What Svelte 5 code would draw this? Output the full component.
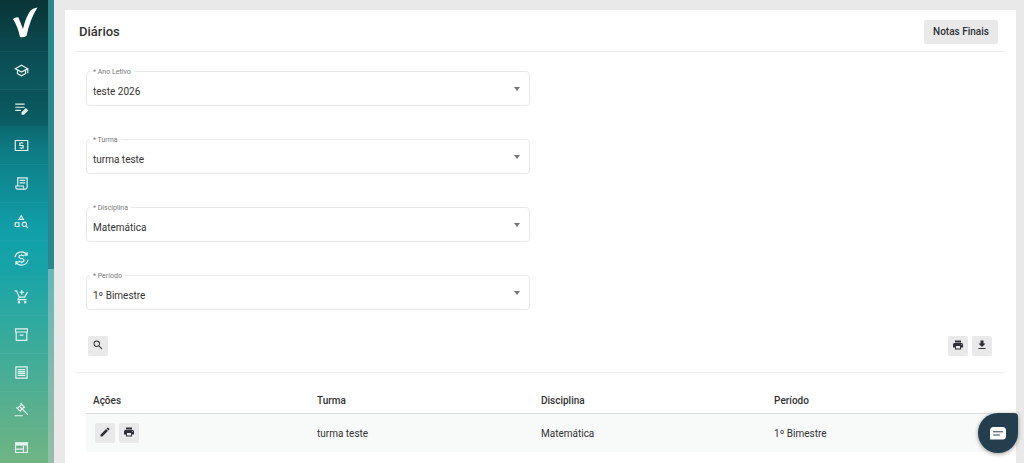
<script lang="ts">
  const menu = [
    { name: 'Acadêmico', icon: 'school' },
    { name: 'Diários', icon: 'edit-note', active: true },
    { name: 'Financeiro', icon: 'money' },
    { name: 'Notas fiscais', icon: 'receipt' },
    { name: 'Categorias', icon: 'category-search' },
    { name: 'Câmbio', icon: 'exchange' },
    { name: 'Compras', icon: 'cart' },
    { name: 'Arquivo', icon: 'archive' },
    { name: 'Relatórios', icon: 'list' },
    { name: 'Jurídico', icon: 'gavel' },
    { name: 'Portal', icon: 'web' },
  ];

  const fields = [
    { id: 'ano', label: 'Ano Letivo', value: 'teste 2026' },
    { id: 'turma', label: 'Turma', value: 'turma teste' },
    { id: 'disciplina', label: 'Disciplina', value: 'Matemática' },
    { id: 'periodo', label: 'Período', value: '1º Bimestre' },
  ];

  const rows = [
    { turma: 'turma teste', disciplina: 'Matemática', periodo: '1º Bimestre' },
  ];
</script>

{#snippet printIcon()}
  <svg viewBox="0 0 24 24"><path d="M19 8H5c-1.66 0-3 1.34-3 3v6h4v4h12v-4h4v-6c0-1.66-1.34-3-3-3zm-3 11H8v-5h8v5zm3-7c-.55 0-1-.45-1-1s.45-1 1-1 1 .45 1 1-.45 1-1 1zm-1-9H6v4h12V3z" /></svg>
{/snippet}

<div class="page">
  <aside class="sidebar">
    <div class="menu">
      <a class="logo" href="#inicio" aria-label="Início">
        <svg viewBox="0 0 26 32"><path d="M1 12 Q4 9.500 6.500 10.500 L11 22 Q14 9 19 3 Q21 1 25.500 0.500 Q18 12 14.500 29 Q11 31 8 30 Q6 20 1 12 Z" /></svg>
      </a>
      <nav>
        {#each menu as item}
          <a href="#{item.icon}" class="menu-item" class:active={item.active} aria-label={item.name}>
            <svg viewBox="0 0 24 24">
              {#if item.icon === 'school'}
                <path d="M12 3.500 22 9 12 14.500 2 9Z M5.500 11.500V17L12 20.500 18.500 17V11.500 M22 9V16.500" />
              {:else if item.icon === 'edit-note'}
                <path d="M2 5H17M2 10H17M2 15H11" />
                <path class="solid" d="M12 22V18L19 11 23 15 16 22Z" />
              {:else if item.icon === 'money'}
                <path d="M2 4H22V20H2Z M15 8H9.500V12H14.500V16H9 M12 6.500V8M12 16V17.500" />
              {:else if item.icon === 'receipt'}
                <path d="M6 16V3H21V18Q21 21 18 21H5Q3 21 3 18V16H15V18Q15 21 18 21 M9 7H18M9 11H18" />
              {:else if item.icon === 'category-search'}
                <path d="M11.500 2.500 15 8.500H8Z M2 14H8V20H2Z" />
                <circle cx="16.500" cy="16.500" r="3.500" />
                <path d="M19 19 22.500 22.500" />
              {:else if item.icon === 'exchange'}
                <path d="M1.500 10A10.500 10.500 0 0 1 20.500 6M22.500 14A10.500 10.500 0 0 1 3.500 18M21 2V6.500H16.500M3 22V17.500H7.500" />
                <path d="M16 8.500Q15 6.500 12 6.500 8 6.500 8 9.200 8 11.500 12 12 16 12.500 16 15 16 17.500 12 17.500 9 17.500 8 15.500M12 4.500V6.500M12 17.500V19.500" />
              {:else if item.icon === 'cart'}
                <path d="M1 3H4L8.500 13H17L21.500 5M8.500 13 6.500 17H20M12.500 1.500V9M9 5.200H16" />
                <circle cx="8" cy="21" r="1.200" />
                <circle cx="18" cy="21" r="1.200" />
              {:else if item.icon === 'archive'}
                <path d="M2.500 3H21.500V8H2.500ZM3.500 8V21.500H20.500V8M9 13H15" />
              {:else if item.icon === 'list'}
                <path d="M3 3H21V21H3ZM6 7.500H18M6 10.500H18M6 13.500H18M6 16.500H18" />
              {:else if item.icon === 'gavel'}
                <path d="M1 22H14M13 11 22.500 20.500" />
                <path d="M3.500 8.500 10.500 15.500M10.500 2 17.500 9M6 10 12 4M10 14 16 8M9 7 13 11" />
              {:else}
                <path d="M2.500 4.500H21.500V20H2.500ZM2.500 14.500H15M15 9V20" />
                <path class="solid" d="M2 4H22V9H2Z" />
              {/if}
            </svg>
          </a>
        {/each}
      </nav>
    </div>
    <div class="scroll-track"><div class="scroll-thumb"></div></div>
  </aside>

  <main class="card">
    <header>
      <h1>Diários</h1>
      <button class="btn-text">Notas Finais</button>
    </header>

    <form class="filters">
      {#each fields as field}
        <div class="field">
          <label for={field.id}>* {field.label}</label>
          <select id={field.id}>
            <option>{field.value}</option>
          </select>
        </div>
      {/each}
    </form>

    <div class="toolbar">
      <button class="btn-icon search" aria-label="Pesquisar">
        <svg viewBox="0 0 24 24"><path d="M15.500 14h-.79l-.28-.27A6.470 6.470 0 0 0 16 9.500 6.500 6.500 0 1 0 9.500 16c1.610 0 3.090-.59 4.230-1.570l.27.28v.79l5 4.990L20.490 19l-4.990-5zm-6 0C7.010 14 5 11.990 5 9.500S7.010 5 9.500 5 14 7.010 14 9.500 11.990 14 9.500 14z" /></svg>
      </button>
      <div class="export">
        <button class="btn-icon" aria-label="Imprimir">{@render printIcon()}</button>
        <button class="btn-icon" aria-label="Baixar">
          <svg viewBox="0 0 24 24"><path d="M19 9h-4V3H9v6H5l7 7 7-7zM5 18v2h14v-2H5z" /></svg>
        </button>
      </div>
    </div>

    <div class="results">
      <table>
        <thead>
          <tr>
            <th class="col-actions">Ações</th>
            <th class="col-turma">Turma</th>
            <th class="col-disciplina">Disciplina</th>
            <th>Período</th>
          </tr>
        </thead>
        <tbody>
          {#each rows as row}
            <tr>
              <td>
                <div class="actions">
                  <button class="btn-icon" aria-label="Editar">
                    <svg viewBox="0 0 24 24"><path d="M3 17.250V21h3.750L17.810 9.940l-3.750-3.750L3 17.250zM20.710 7.040a1 1 0 0 0 0-1.410l-2.340-2.340a1 1 0 0 0-1.410 0l-1.830 1.830 3.750 3.750 1.830-1.830z" /></svg>
                  </button>
                  <button class="btn-icon" aria-label="Imprimir diário">{@render printIcon()}</button>
                </div>
              </td>
              <td>{row.turma}</td>
              <td>{row.disciplina}</td>
              <td>{row.periodo}</td>
            </tr>
          {/each}
        </tbody>
      </table>
    </div>
  </main>

  <button class="chat" aria-label="Abrir chat">
    <svg viewBox="0 0 16 13">
      <path fill="#fff" d="M3.500 0H12.500Q16 0 16 3.500V9Q16 12.500 12.500 12.500H0V3.500Q0 0 3.500 0Z" />
      <path fill="none" stroke="#253e4d" stroke-linecap="round" d="M3.500 4.800H12.500M3.500 8H9.500" />
    </svg>
  </button>
</div>

<style>
  :global(body) {
    margin: 0;
    background: #e9e9e9;
    font-family: Roboto, "Liberation Sans", sans-serif;
    font-size: 10px;
    color: #333;
  }

  .page {
    display: flex;
    height: 100vh;
    overflow: hidden;
  }

  .sidebar {
    display: flex;
    flex: none;
    width: 54px;
    overflow: hidden;
    background: linear-gradient(#0a3436 0%, #0b4f55 13%, #0c6269 25%, #0e7f87 34%, #11a0aa 50%, #17a4a8 58%, #3aab9b 74%, #70b484 100%);
  }

  .menu {
    flex: 1;
  }

  .logo {
    display: flex;
    align-items: center;
    justify-content: center;
    height: 52px;
    padding: 0 0 6px 2px;
    box-sizing: border-box;
    border-bottom: 1px solid rgba(255, 255, 255, 0.04);
  }

  .logo svg {
    width: 26px;
    height: 32px;
    fill: #fff;
  }

  nav {
    display: grid;
    grid-auto-rows: 1fr;
    height: 415px;
  }

  .menu-item {
    display: flex;
    align-items: center;
    justify-content: center;
    padding-right: 5px;
    border-bottom: 1px solid rgba(255, 255, 255, 0.04);
  }

  .menu-item.active {
    background: rgba(0, 30, 35, 0.12);
  }

  .menu-item svg {
    width: 15px;
    height: 15px;
    fill: none;
    stroke: #e2f3f1;
    stroke-width: 1.9;
  }

  .menu-item .solid {
    fill: #e2f3f1;
    stroke: none;
  }

  .scroll-track {
    width: 6px;
    background: rgba(190, 200, 200, 0.5);
  }

  .scroll-thumb {
    height: 58%;
    background: #2b858c;
  }

  .card {
    flex: 1;
    margin: 10px 8px 0 11px;
    background: #fff;
  }

  header {
    display: flex;
    align-items: center;
    justify-content: space-between;
    height: 42px;
    margin: 0 12px 0 11px;
    padding: 2px 6px 0 3px;
    box-sizing: border-box;
    border-bottom: 1px solid #e9e9e9;
  }

  h1 {
    margin: 0;
    font-size: 13px;
    font-weight: 500;
  }

  button {
    border: none;
    border-radius: 2px;
    background: #e9e9e9;
    color: #2f3136;
    font-family: inherit;
    cursor: pointer;
  }

  .btn-text {
    width: 74px;
    height: 24px;
    padding: 0;
    font-size: 10px;
    font-weight: 500;
  }

  .filters {
    display: grid;
    gap: 33px;
    max-width: 444px;
    margin: 19px 21px 0;
  }

  .field {
    position: relative;
    height: 35px;
    box-sizing: border-box;
    border: 1px solid #e8e8e8;
    border-radius: 4px;
  }

  .field label {
    position: absolute;
    top: -4px;
    left: 3px;
    padding: 0 3px;
    background: #fff;
    color: #777;
    font-size: 7px;
    line-height: 9px;
  }

  .field::after {
    content: '';
    position: absolute;
    top: 15px;
    right: 9px;
    border: 3px solid transparent;
    border-top: 4px solid #757575;
    border-bottom: none;
    pointer-events: none;
  }

  select {
    width: 100%;
    height: 100%;
    padding: 5px 6px 0;
    border: none;
    background: none;
    color: #333;
    font-family: inherit;
    font-size: 10px;
    appearance: none;
  }

  .toolbar {
    display: flex;
    justify-content: space-between;
    margin: 0 12px 0 11px;
    padding: 26px 12px 16px;
    border-bottom: 1px solid #f0f0f0;
  }

  .export,
  .actions {
    display: flex;
    gap: 4px;
  }

  .btn-icon {
    display: flex;
    align-items: center;
    justify-content: center;
    width: 20px;
    height: 20px;
    padding: 0 0 2px;
  }

  .btn-icon svg {
    width: 12px;
    height: 12px;
    fill: #2f3136;
  }

  .results {
    padding: 14px 17px 0 21px;
  }

  table {
    width: 100%;
    table-layout: fixed;
    border-collapse: collapse;
  }

  th,
  td {
    padding: 0 7px;
    text-align: left;
  }

  th {
    height: 26px;
    border-bottom: 1px solid #dcdcdc;
    font-weight: 500;
  }

  td {
    height: 38px;
    background: #f8f9f9;
  }

  .col-actions,
  .col-turma {
    width: 23%;
  }

  .col-disciplina {
    width: 24%;
  }

  .actions {
    padding-left: 2px;
  }

  .chat {
    position: fixed;
    right: 6px;
    bottom: 10px;
    display: flex;
    align-items: center;
    justify-content: center;
    width: 40px;
    height: 40px;
    padding: 0;
    border-radius: 50% 4px 50% 50%;
    background: #253e4d;
    box-shadow: 0 1px 4px rgba(0, 0, 0, 0.4);
  }

  .chat svg {
    width: 16px;
    height: 13px;
  }
</style>
